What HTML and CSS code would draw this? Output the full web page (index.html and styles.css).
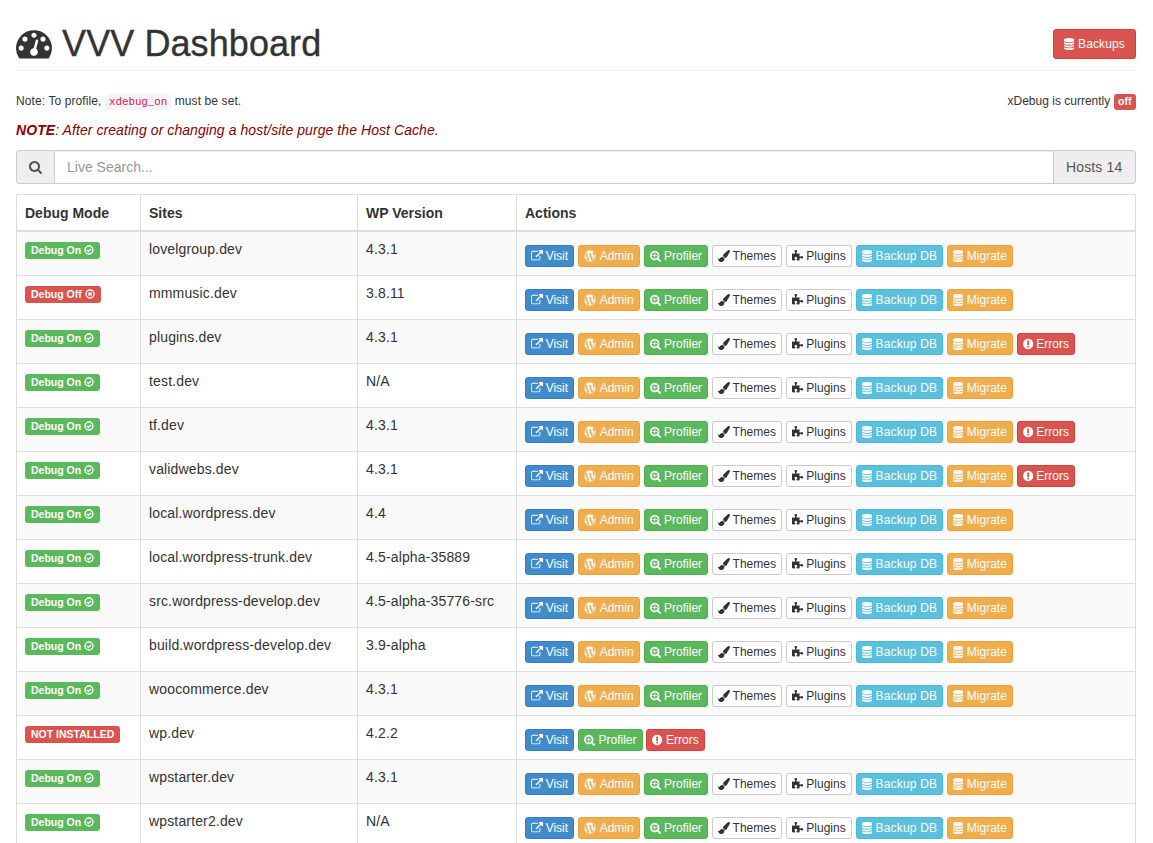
FILE: index.html
```html
<!DOCTYPE html>
<html lang="en">
<head>
  <meta charset="UTF-8">
  <title>VVV Dashboard</title>
  <link rel="stylesheet" href="styles.css">
</head>
<body>

  <svg class="sprite" xmlns="http://www.w3.org/2000/svg">
    <symbol id="i-dash" viewBox="0 0 1792 1792"><path d="M384 1152q0-53-37.5-90.5t-90.5-37.5-90.5 37.5-37.5 90.5 37.5 90.5 90.5 37.5 90.5-37.5 37.5-90.5zm192-448q0-53-37.5-90.5t-90.5-37.5-90.5 37.5-37.5 90.5 37.5 90.5 90.5 37.5 90.5-37.5 37.5-90.5zm428 481l101-382q6-26-7.5-48.5t-38.5-29.5-48 6.5-30 39.5l-101 382q-60 5-107 43.5t-63 98.5q-20 77 20 146t117 89 146-20 89-117q16-60-6-117t-72-91zm660-33q0-53-37.5-90.5t-90.5-37.5-90.5 37.5-37.5 90.5 37.5 90.5 90.5 37.5 90.5-37.5 37.5-90.5zm-640-640q0-53-37.5-90.5t-90.5-37.5-90.5 37.5-37.5 90.5 37.5 90.5 90.5 37.5 90.5-37.5 37.5-90.5zm448 192q0-53-37.5-90.5t-90.5-37.5-90.5 37.5-37.5 90.5 37.5 90.5 90.5 37.5 90.5-37.5 37.5-90.5zm320 448q0 261-141 483-19 29-54 29h-1402q-35 0-54-29-141-221-141-483 0-182 71-348t191-286 286-191 348-71 348 71 286 191 191 286 71 348z"/></symbol>
    <symbol id="i-db" viewBox="0 0 1536 1792"><path d="M768 768q237 0 443-43t325-127v170q0 69-103 128t-280 93.5-385 34.5-385-34.5-280-93.5-103-128v-170q119 84 325 127t443 43zm0 768q237 0 443-43t325-127v170q0 69-103 128t-280 93.5-385 34.5-385-34.5-280-93.5-103-128v-170q119 84 325 127t443 43zm0-384q237 0 443-43t325-127v170q0 69-103 128t-280 93.5-385 34.5-385-34.5-280-93.5-103-128v-170q119 84 325 127t443 43zm0-1152q208 0 385 34.5t280 93.5 103 128v128q0 69-103 128t-280 93.5-385 34.5-385-34.5-280-93.5-103-128v-128q0-69 103-128t280-93.5 385-34.5z"/></symbol>
    <symbol id="i-search" viewBox="0 0 1664 1792"><path d="M1152 832q0-185-131.5-316.5t-316.5-131.5-316.5 131.5-131.5 316.5 131.5 316.5 316.5 131.5 316.5-131.5 131.5-316.5zm512 832q0 52-38 90t-90 38q-54 0-90-38l-343-342q-179 124-399 124-143 0-273.5-55.5t-225-150-150-225-55.5-273.5 55.5-273.5 150-225 225-150 273.5-55.5 273.5 55.5 225 150 150 225 55.5 273.5q0 220-124 399l343 343q37 37 37 90z"/></symbol>
    <symbol id="i-link" viewBox="0 0 1792 1792"><path d="M1408 928v320q0 119-84.5 203.5t-203.5 84.5h-832q-119 0-203.5-84.5t-84.5-203.5v-832q0-119 84.5-203.5t203.5-84.5h704q14 0 23 9t9 23v64q0 14-9 23t-23 9h-704q-66 0-113 47t-47 113v832q0 66 47 113t113 47h832q66 0 113-47t47-113v-320q0-14 9-23t23-9h64q14 0 23 9t9 23zm384-864v512q0 26-19 45t-45 19-45-19l-176-176-652 652q-10 10-23 10t-23-10l-114-114q-10-10-10-23t10-23l652-652-176-176q-19-19-19-45t19-45 45-19h512q26 0 45 19t19 45z"/></symbol>
    <symbol id="i-wp" viewBox="0 0 1792 1792"><path d="M127 896q0-163 67-313l367 1005q-196-95-315-281t-119-411zm1288-39q0 19-2.5 38.5t-10 49.5-11.5 44-17.5 59-17.5 58l-76 256-278-826q46-3 88-8 19-2 26-18.5t-2.5-31-28.5-13.5l-205 10q-75-1-202-10-12-1-20.5 5t-11.5 15-1.5 18.5 9 16.5 19.5 8l80 8 120 328-168 504-280-832q46-3 88-8 19-2 26-18.5t-2.5-31-28.5-13.5l-205 10q-7 0-23-.5t-26-.5q105-160 274.5-253.5t367.5-93.5q147 0 280.5 53t238.5 149h-10q-55 0-92 40.5t-37 95.5q0 12 2 24t4 21.5 8 23 9 21 12 22.5 12.5 21 14.5 24 14 23q63 107 63 212zm-506 106l237 647q1 6 5 11-126 44-255 44-112 0-217-32zm661-436q95 174 95 369 0 209-104 385.5t-279 278.5l235-678q59-169 59-276 0-42-6-79zm-674-527q182 0 348 71t286 191 191 286 71 348-71 348-191 286-286 191-348 71-348-71-286-191-191-286-71-348 71-348 191-286 286-191 348-71zm0 1751q173 0 331.5-68t273-182.5 182.5-273 68-331.5-68-331.5-182.5-273-273-182.5-331.5-68-331.5 68-273 182.5-182.5 273-68 331.5 68 331.5 182.5 273 273 182.5 331.5 68z"/></symbol>
    <symbol id="i-zoom" viewBox="0 0 1664 1792"><path d="M1024 800v64q0 13-9.5 22.5t-22.5 9.5h-224v224q0 13-9.5 22.5t-22.5 9.5h-64q-13 0-22.5-9.5t-9.5-22.5v-224h-224q-13 0-22.5-9.5t-9.5-22.5v-64q0-13 9.5-22.5t22.5-9.5h224v-224q0-13 9.5-22.5t22.5-9.5h64q13 0 22.5 9.5t9.5 22.5v224h224q13 0 22.5 9.5t9.5 22.5zm128 32q0-185-131.5-316.5t-316.5-131.5-316.5 131.5-131.5 316.5 131.5 316.5 316.5 131.5 316.5-131.5 131.5-316.5zm512 832q0 53-37.5 90.5t-90.5 37.5q-54 0-90-38l-343-342q-179 124-399 124-143 0-273.5-55.5t-225-150-150-225-55.5-273.5 55.5-273.5 150-225 225-150 273.5-55.5 273.5 55.5 225 150 150 225 55.5 273.5q0 220-124 399l343 343q37 37 37 90z"/></symbol>
    <symbol id="i-brush" viewBox="0 0 1792 1792"><path d="M1615 0q70 0 122.5 46.5t52.5 116.5q0 63-45 151-332 629-465 752-97 91-218 91-126 0-216.5-92.5t-90.5-219.5q0-128 92-212l638-579q59-54 130-54zm-909 1034q39 76 106.5 130t150.5 76l1 71q4 213-129.5 347t-348.5 134q-123 0-218-46.5t-152.5-127.5-86.5-183-29-220q7 5 41 30t62 44.5 59 36.5 46 17q41 0 55-37 25-66 57.5-112.5t69.5-76 88-47.5 103-25.5 125-10.5z"/></symbol>
    <symbol id="i-puzzle" viewBox="0 0 1664 1792"><path d="M1664 1098q0 81-44.5 135t-123.5 54q-41 0-77.5-17.5t-59-38-56.5-38-71-17.5q-110 0-110 124 0 39 16 115t15 115v5q-22 0-33 1-34 3-97.5 11.5t-115.5 13.5-98 5q-61 0-103-26.5t-42-83.5q0-37 17.5-71t38-56.5 38-59 17.5-77.5q0-79-54-123.5t-135-44.5q-84 0-143 45.5t-59 127.5q0 43 15 83t33.5 64.5 33.5 53 15 50.5q0 45-46 89-37 35-117 35-95 0-245-24-9-2-27.5-4t-27.5-4l-13-2q-3-1-6-1-4 0-4-4v-1024q2 1 17.5 3.5t34 5 21.5 3.5q150 24 245 24 80 0 117-35 46-44 46-89 0-22-15-50.5t-33.5-53-33.5-64.5-15-83q0-82 59-127.5t144-45.5q80 0 134 44.5t54 123.5q0 41-17.5 77.5t-38 59-38 56.5-17.5 71q0 57 42 83.5t103 26.5q64 0 180-15t163-17v2q-1 2-3.5 17.5t-5 34-3.5 21.5q-24 150-24 245 0 80 35 117 44 46 89 46 22 0 50.5-15t53-33.5 64.5-33.5 83-15q82 0 127.5 59t45.5 143z"/></symbol>
    <symbol id="i-err" viewBox="0 0 1536 1792"><path d="M768 128q209 0 385.5 103t279.5 279.5 103 385.5-103 385.5-279.5 279.5-385.5 103-385.5-103-279.5-279.5-103-385.5 103-385.5 279.5-279.5 385.5-103zm128 1247v-190q0-14-9-23.5t-22-9.5h-192q-13 0-23 10t-10 23v190q0 13 10 23t23 10h192q13 0 22-9.5t9-23.5zm-2-344l18-621q0-12-10-18-10-8-24-8h-220q-14 0-24 8-10 6-10 18l17 621q0 10 10 17.5t24 7.5h185q14 0 23.5-7.5t11.5-17.5z"/></symbol>
    <symbol id="i-on" viewBox="0 0 16 16"><circle cx="8" cy="8" r="6.4" fill="none" stroke="currentColor" stroke-width="2.2"/><path d="M4.7 8l2.4 2.4 4.2-4.2" fill="none" stroke="currentColor" stroke-width="2.2"/></symbol>
    <symbol id="i-off" viewBox="0 0 16 16"><circle cx="8" cy="8" r="6.4" fill="none" stroke="currentColor" stroke-width="2.2"/><path d="M5.5 5.5l5 5m0-5l-5 5" fill="none" stroke="currentColor" stroke-width="2.2"/></symbol>
  </svg>

  <div class="container">

    <header class="page-header">
      <h1><svg class="ic ic-dash"><use href="#i-dash"/></svg> VVV Dashboard</h1>
      <a class="btn btn-sm btn-danger" href="#"><svg class="ic ic-db"><use href="#i-db"/></svg> Backups</a>
    </header>

    <div class="note-row">
      <p class="note-profile">Note: To profile, <code>xdebug_on</code> must be set.</p>
      <p>xDebug is currently <span class="label label-danger label-off">off</span></p>
    </div>

    <p class="purge-note"><strong>NOTE</strong>: After creating or changing a host/site purge the Host Cache.</p>

    <div class="input-group">
      <span class="addon addon-left"><svg class="ic ic-search"><use href="#i-search"/></svg></span>
      <input class="search" type="text" placeholder="Live Search...">
      <span class="addon addon-right">Hosts 14</span>
    </div>

    <table class="sites">
      <colgroup>
        <col class="col-debug">
        <col class="col-site">
        <col class="col-wp">
        <col>
      </colgroup>
      <thead>
        <tr><th>Debug Mode</th><th>Sites</th><th>WP Version</th><th>Actions</th></tr>
      </thead>
      <tbody>
        <tr>
          <td><span class="label label-success">Debug On <svg class="ic ic-o"><use href="#i-on"/></svg></span></td>
          <td>lovelgroup.dev</td>
          <td>4.3.1</td>
          <td><div class="actions">
            <a class="btn btn-primary" href="#"><svg class="ic ic-link"><use href="#i-link"/></svg> Visit</a>
            <a class="btn btn-warning" href="#"><svg class="ic ic-wp"><use href="#i-wp"/></svg> Admin</a>
            <a class="btn btn-success" href="#"><svg class="ic ic-mag"><use href="#i-zoom"/></svg> Profiler</a>
            <a class="btn btn-default" href="#"><svg class="ic ic-brush"><use href="#i-brush"/></svg> Themes</a>
            <a class="btn btn-default" href="#"><svg class="ic ic-mag"><use href="#i-puzzle"/></svg> Plugins</a>
            <a class="btn btn-info" href="#"><svg class="ic ic-db"><use href="#i-db"/></svg> Backup DB</a>
            <a class="btn btn-warning" href="#"><svg class="ic ic-db"><use href="#i-db"/></svg> Migrate</a>
          </div></td>
        </tr>
        <tr>
          <td><span class="label label-danger">Debug Off <svg class="ic ic-o"><use href="#i-off"/></svg></span></td>
          <td>mmmusic.dev</td>
          <td>3.8.11</td>
          <td><div class="actions">
            <a class="btn btn-primary" href="#"><svg class="ic ic-link"><use href="#i-link"/></svg> Visit</a>
            <a class="btn btn-warning" href="#"><svg class="ic ic-wp"><use href="#i-wp"/></svg> Admin</a>
            <a class="btn btn-success" href="#"><svg class="ic ic-mag"><use href="#i-zoom"/></svg> Profiler</a>
            <a class="btn btn-default" href="#"><svg class="ic ic-brush"><use href="#i-brush"/></svg> Themes</a>
            <a class="btn btn-default" href="#"><svg class="ic ic-mag"><use href="#i-puzzle"/></svg> Plugins</a>
            <a class="btn btn-info" href="#"><svg class="ic ic-db"><use href="#i-db"/></svg> Backup DB</a>
            <a class="btn btn-warning" href="#"><svg class="ic ic-db"><use href="#i-db"/></svg> Migrate</a>
          </div></td>
        </tr>
        <tr>
          <td><span class="label label-success">Debug On <svg class="ic ic-o"><use href="#i-on"/></svg></span></td>
          <td>plugins.dev</td>
          <td>4.3.1</td>
          <td><div class="actions">
            <a class="btn btn-primary" href="#"><svg class="ic ic-link"><use href="#i-link"/></svg> Visit</a>
            <a class="btn btn-warning" href="#"><svg class="ic ic-wp"><use href="#i-wp"/></svg> Admin</a>
            <a class="btn btn-success" href="#"><svg class="ic ic-mag"><use href="#i-zoom"/></svg> Profiler</a>
            <a class="btn btn-default" href="#"><svg class="ic ic-brush"><use href="#i-brush"/></svg> Themes</a>
            <a class="btn btn-default" href="#"><svg class="ic ic-mag"><use href="#i-puzzle"/></svg> Plugins</a>
            <a class="btn btn-info" href="#"><svg class="ic ic-db"><use href="#i-db"/></svg> Backup DB</a>
            <a class="btn btn-warning" href="#"><svg class="ic ic-db"><use href="#i-db"/></svg> Migrate</a>
            <a class="btn btn-danger" href="#"><svg class="ic ic-db"><use href="#i-err"/></svg> Errors</a>
          </div></td>
        </tr>
        <tr>
          <td><span class="label label-success">Debug On <svg class="ic ic-o"><use href="#i-on"/></svg></span></td>
          <td>test.dev</td>
          <td>N/A</td>
          <td><div class="actions">
            <a class="btn btn-primary" href="#"><svg class="ic ic-link"><use href="#i-link"/></svg> Visit</a>
            <a class="btn btn-warning" href="#"><svg class="ic ic-wp"><use href="#i-wp"/></svg> Admin</a>
            <a class="btn btn-success" href="#"><svg class="ic ic-mag"><use href="#i-zoom"/></svg> Profiler</a>
            <a class="btn btn-default" href="#"><svg class="ic ic-brush"><use href="#i-brush"/></svg> Themes</a>
            <a class="btn btn-default" href="#"><svg class="ic ic-mag"><use href="#i-puzzle"/></svg> Plugins</a>
            <a class="btn btn-info" href="#"><svg class="ic ic-db"><use href="#i-db"/></svg> Backup DB</a>
            <a class="btn btn-warning" href="#"><svg class="ic ic-db"><use href="#i-db"/></svg> Migrate</a>
          </div></td>
        </tr>
        <tr>
          <td><span class="label label-success">Debug On <svg class="ic ic-o"><use href="#i-on"/></svg></span></td>
          <td>tf.dev</td>
          <td>4.3.1</td>
          <td><div class="actions">
            <a class="btn btn-primary" href="#"><svg class="ic ic-link"><use href="#i-link"/></svg> Visit</a>
            <a class="btn btn-warning" href="#"><svg class="ic ic-wp"><use href="#i-wp"/></svg> Admin</a>
            <a class="btn btn-success" href="#"><svg class="ic ic-mag"><use href="#i-zoom"/></svg> Profiler</a>
            <a class="btn btn-default" href="#"><svg class="ic ic-brush"><use href="#i-brush"/></svg> Themes</a>
            <a class="btn btn-default" href="#"><svg class="ic ic-mag"><use href="#i-puzzle"/></svg> Plugins</a>
            <a class="btn btn-info" href="#"><svg class="ic ic-db"><use href="#i-db"/></svg> Backup DB</a>
            <a class="btn btn-warning" href="#"><svg class="ic ic-db"><use href="#i-db"/></svg> Migrate</a>
            <a class="btn btn-danger" href="#"><svg class="ic ic-db"><use href="#i-err"/></svg> Errors</a>
          </div></td>
        </tr>
        <tr>
          <td><span class="label label-success">Debug On <svg class="ic ic-o"><use href="#i-on"/></svg></span></td>
          <td>validwebs.dev</td>
          <td>4.3.1</td>
          <td><div class="actions">
            <a class="btn btn-primary" href="#"><svg class="ic ic-link"><use href="#i-link"/></svg> Visit</a>
            <a class="btn btn-warning" href="#"><svg class="ic ic-wp"><use href="#i-wp"/></svg> Admin</a>
            <a class="btn btn-success" href="#"><svg class="ic ic-mag"><use href="#i-zoom"/></svg> Profiler</a>
            <a class="btn btn-default" href="#"><svg class="ic ic-brush"><use href="#i-brush"/></svg> Themes</a>
            <a class="btn btn-default" href="#"><svg class="ic ic-mag"><use href="#i-puzzle"/></svg> Plugins</a>
            <a class="btn btn-info" href="#"><svg class="ic ic-db"><use href="#i-db"/></svg> Backup DB</a>
            <a class="btn btn-warning" href="#"><svg class="ic ic-db"><use href="#i-db"/></svg> Migrate</a>
            <a class="btn btn-danger" href="#"><svg class="ic ic-db"><use href="#i-err"/></svg> Errors</a>
          </div></td>
        </tr>
        <tr>
          <td><span class="label label-success">Debug On <svg class="ic ic-o"><use href="#i-on"/></svg></span></td>
          <td>local.wordpress.dev</td>
          <td>4.4</td>
          <td><div class="actions">
            <a class="btn btn-primary" href="#"><svg class="ic ic-link"><use href="#i-link"/></svg> Visit</a>
            <a class="btn btn-warning" href="#"><svg class="ic ic-wp"><use href="#i-wp"/></svg> Admin</a>
            <a class="btn btn-success" href="#"><svg class="ic ic-mag"><use href="#i-zoom"/></svg> Profiler</a>
            <a class="btn btn-default" href="#"><svg class="ic ic-brush"><use href="#i-brush"/></svg> Themes</a>
            <a class="btn btn-default" href="#"><svg class="ic ic-mag"><use href="#i-puzzle"/></svg> Plugins</a>
            <a class="btn btn-info" href="#"><svg class="ic ic-db"><use href="#i-db"/></svg> Backup DB</a>
            <a class="btn btn-warning" href="#"><svg class="ic ic-db"><use href="#i-db"/></svg> Migrate</a>
          </div></td>
        </tr>
        <tr>
          <td><span class="label label-success">Debug On <svg class="ic ic-o"><use href="#i-on"/></svg></span></td>
          <td>local.wordpress-trunk.dev</td>
          <td>4.5-alpha-35889</td>
          <td><div class="actions">
            <a class="btn btn-primary" href="#"><svg class="ic ic-link"><use href="#i-link"/></svg> Visit</a>
            <a class="btn btn-warning" href="#"><svg class="ic ic-wp"><use href="#i-wp"/></svg> Admin</a>
            <a class="btn btn-success" href="#"><svg class="ic ic-mag"><use href="#i-zoom"/></svg> Profiler</a>
            <a class="btn btn-default" href="#"><svg class="ic ic-brush"><use href="#i-brush"/></svg> Themes</a>
            <a class="btn btn-default" href="#"><svg class="ic ic-mag"><use href="#i-puzzle"/></svg> Plugins</a>
            <a class="btn btn-info" href="#"><svg class="ic ic-db"><use href="#i-db"/></svg> Backup DB</a>
            <a class="btn btn-warning" href="#"><svg class="ic ic-db"><use href="#i-db"/></svg> Migrate</a>
          </div></td>
        </tr>
        <tr>
          <td><span class="label label-success">Debug On <svg class="ic ic-o"><use href="#i-on"/></svg></span></td>
          <td>src.wordpress-develop.dev</td>
          <td>4.5-alpha-35776-src</td>
          <td><div class="actions">
            <a class="btn btn-primary" href="#"><svg class="ic ic-link"><use href="#i-link"/></svg> Visit</a>
            <a class="btn btn-warning" href="#"><svg class="ic ic-wp"><use href="#i-wp"/></svg> Admin</a>
            <a class="btn btn-success" href="#"><svg class="ic ic-mag"><use href="#i-zoom"/></svg> Profiler</a>
            <a class="btn btn-default" href="#"><svg class="ic ic-brush"><use href="#i-brush"/></svg> Themes</a>
            <a class="btn btn-default" href="#"><svg class="ic ic-mag"><use href="#i-puzzle"/></svg> Plugins</a>
            <a class="btn btn-info" href="#"><svg class="ic ic-db"><use href="#i-db"/></svg> Backup DB</a>
            <a class="btn btn-warning" href="#"><svg class="ic ic-db"><use href="#i-db"/></svg> Migrate</a>
          </div></td>
        </tr>
        <tr>
          <td><span class="label label-success">Debug On <svg class="ic ic-o"><use href="#i-on"/></svg></span></td>
          <td>build.wordpress-develop.dev</td>
          <td>3.9-alpha</td>
          <td><div class="actions">
            <a class="btn btn-primary" href="#"><svg class="ic ic-link"><use href="#i-link"/></svg> Visit</a>
            <a class="btn btn-warning" href="#"><svg class="ic ic-wp"><use href="#i-wp"/></svg> Admin</a>
            <a class="btn btn-success" href="#"><svg class="ic ic-mag"><use href="#i-zoom"/></svg> Profiler</a>
            <a class="btn btn-default" href="#"><svg class="ic ic-brush"><use href="#i-brush"/></svg> Themes</a>
            <a class="btn btn-default" href="#"><svg class="ic ic-mag"><use href="#i-puzzle"/></svg> Plugins</a>
            <a class="btn btn-info" href="#"><svg class="ic ic-db"><use href="#i-db"/></svg> Backup DB</a>
            <a class="btn btn-warning" href="#"><svg class="ic ic-db"><use href="#i-db"/></svg> Migrate</a>
          </div></td>
        </tr>
        <tr>
          <td><span class="label label-success">Debug On <svg class="ic ic-o"><use href="#i-on"/></svg></span></td>
          <td>woocommerce.dev</td>
          <td>4.3.1</td>
          <td><div class="actions">
            <a class="btn btn-primary" href="#"><svg class="ic ic-link"><use href="#i-link"/></svg> Visit</a>
            <a class="btn btn-warning" href="#"><svg class="ic ic-wp"><use href="#i-wp"/></svg> Admin</a>
            <a class="btn btn-success" href="#"><svg class="ic ic-mag"><use href="#i-zoom"/></svg> Profiler</a>
            <a class="btn btn-default" href="#"><svg class="ic ic-brush"><use href="#i-brush"/></svg> Themes</a>
            <a class="btn btn-default" href="#"><svg class="ic ic-mag"><use href="#i-puzzle"/></svg> Plugins</a>
            <a class="btn btn-info" href="#"><svg class="ic ic-db"><use href="#i-db"/></svg> Backup DB</a>
            <a class="btn btn-warning" href="#"><svg class="ic ic-db"><use href="#i-db"/></svg> Migrate</a>
          </div></td>
        </tr>
        <tr>
          <td><span class="label label-danger">NOT INSTALLED</span></td>
          <td>wp.dev</td>
          <td>4.2.2</td>
          <td><div class="actions">
            <a class="btn btn-primary" href="#"><svg class="ic ic-link"><use href="#i-link"/></svg> Visit</a>
            <a class="btn btn-success" href="#"><svg class="ic ic-mag"><use href="#i-zoom"/></svg> Profiler</a>
            <a class="btn btn-danger" href="#"><svg class="ic ic-db"><use href="#i-err"/></svg> Errors</a>
          </div></td>
        </tr>
        <tr>
          <td><span class="label label-success">Debug On <svg class="ic ic-o"><use href="#i-on"/></svg></span></td>
          <td>wpstarter.dev</td>
          <td>4.3.1</td>
          <td><div class="actions">
            <a class="btn btn-primary" href="#"><svg class="ic ic-link"><use href="#i-link"/></svg> Visit</a>
            <a class="btn btn-warning" href="#"><svg class="ic ic-wp"><use href="#i-wp"/></svg> Admin</a>
            <a class="btn btn-success" href="#"><svg class="ic ic-mag"><use href="#i-zoom"/></svg> Profiler</a>
            <a class="btn btn-default" href="#"><svg class="ic ic-brush"><use href="#i-brush"/></svg> Themes</a>
            <a class="btn btn-default" href="#"><svg class="ic ic-mag"><use href="#i-puzzle"/></svg> Plugins</a>
            <a class="btn btn-info" href="#"><svg class="ic ic-db"><use href="#i-db"/></svg> Backup DB</a>
            <a class="btn btn-warning" href="#"><svg class="ic ic-db"><use href="#i-db"/></svg> Migrate</a>
          </div></td>
        </tr>
        <tr>
          <td><span class="label label-success">Debug On <svg class="ic ic-o"><use href="#i-on"/></svg></span></td>
          <td>wpstarter2.dev</td>
          <td>N/A</td>
          <td><div class="actions">
            <a class="btn btn-primary" href="#"><svg class="ic ic-link"><use href="#i-link"/></svg> Visit</a>
            <a class="btn btn-warning" href="#"><svg class="ic ic-wp"><use href="#i-wp"/></svg> Admin</a>
            <a class="btn btn-success" href="#"><svg class="ic ic-mag"><use href="#i-zoom"/></svg> Profiler</a>
            <a class="btn btn-default" href="#"><svg class="ic ic-brush"><use href="#i-brush"/></svg> Themes</a>
            <a class="btn btn-default" href="#"><svg class="ic ic-mag"><use href="#i-puzzle"/></svg> Plugins</a>
            <a class="btn btn-info" href="#"><svg class="ic ic-db"><use href="#i-db"/></svg> Backup DB</a>
            <a class="btn btn-warning" href="#"><svg class="ic ic-db"><use href="#i-db"/></svg> Migrate</a>
          </div></td>
        </tr>
      </tbody>
    </table>

  </div>

</body>
</html>
```

FILE: styles.css
```css
* {
  box-sizing: border-box;
}

body {
  margin: 0;
  background: #fff;
  color: #333;
  font-family: "Liberation Sans", Arial, sans-serif;
  font-size: 14px;
  line-height: 20px;
}

p {
  margin: 0;
}

.sprite {
  display: none;
}

.container {
  padding: 0 17px 0 16px;
}

/* icons */

.ic {
  display: inline-block;
  width: 1em;
  height: 1em;
  fill: currentColor;
  vertical-align: -2px;
}

.ic-db {
  width: .86em;
}

.ic-mag {
  width: .93em;
}

.ic-link {
  margin-right: -.7px;
}

.ic-wp {
  margin-right: 1px;
}

.ic-brush {
  margin-right: -.5px;
}

.ic-search {
  vertical-align: -1px;
}

.ic-o {
  width: 10px;
  height: 10px;
  vertical-align: -1px;
}

/* header */

.page-header {
  display: flex;
  justify-content: space-between;
  height: 71px;
  padding-top: 20px;
  border-bottom: 1px solid #eee;
}

.page-header h1 {
  margin: 1px 0 0;
  font-size: 36px;
  font-weight: 500;
  line-height: 45px;
  letter-spacing: .08px;
  -webkit-text-stroke: .35px #333;
}

.page-header h1 .ic {
  width: 36px;
  height: 36px;
  vertical-align: -5px;
}

.note-row {
  display: flex;
  justify-content: space-between;
  margin-top: 20px;
  font-size: 12px;
}

.note-profile {
  letter-spacing: .1px;
}

.note-row code {
  padding: 2px 4px;
  border-radius: 4px;
  background: #f9f2f4;
  color: #c7254e;
  font-family: "Liberation Mono", monospace;
  font-size: 10.8px;
  letter-spacing: 0;
}

.purge-note {
  margin-top: 8px;
  color: #8b0000;
  font-style: italic;
  letter-spacing: .07px;
}

/* search */

.input-group {
  display: flex;
  height: 34px;
  margin-top: 10px;
}

.addon {
  display: flex;
  align-items: center;
  padding: 0 12px;
  border: 1px solid #ccc;
  background: #eee;
  color: #555;
}

.addon-left {
  width: 38px;
  border-right: 0;
  border-radius: 4px 0 0 4px;
}

.addon-right {
  width: 82px;
  border-left: 0;
  border-radius: 0 4px 4px 0;
  letter-spacing: .14px;
  white-space: nowrap;
}

.search {
  flex: 1;
  min-width: 0;
  padding: 6px 12px;
  border: 1px solid #ccc;
  font: inherit;
  color: #555;
  box-shadow: inset 0 1px 1px rgba(0, 0, 0, .075);
}

.search::placeholder {
  color: #999;
  opacity: 1;
}

/* table */

.sites {
  width: 100%;
  margin-top: 10px;
  border-collapse: collapse;
  table-layout: fixed;
}

.col-debug {
  width: 124px;
}

.col-site {
  width: 217px;
}

.col-wp {
  width: 159px;
}

.sites th,
.sites td {
  padding: 8px;
  border: 1px solid #ddd;
  text-align: left;
  vertical-align: top;
}

.sites th {
  padding-bottom: 7px;
  border-bottom-width: 2px;
  font-weight: bold;
}

.sites td {
  padding-top: 7px;
  letter-spacing: .15px;
}

.sites tbody tr:nth-child(odd) {
  background: #f9f9f9;
}

.actions {
  display: flex;
  gap: 3.9px;
  margin-top: 6px;
  letter-spacing: 0;
}

/* buttons and labels */

.btn {
  display: inline-block;
  padding: 1px 5px;
  border: 1px solid transparent;
  border-radius: 3px;
  font-size: 12px;
  line-height: 18px;
  white-space: nowrap;
  text-decoration: none;
  color: #fff;
}

.btn-sm {
  height: 30px;
  margin-top: 9px;
  padding: 5px 10px;
  letter-spacing: .14px;
}

.btn-primary {
  background: #428bca;
  border-color: #357ebd;
}

.btn-warning {
  background: #f0ad4e;
  border-color: #eea236;
}

.btn-success {
  background: #5cb85c;
  border-color: #4cae4c;
}

.btn-info {
  background: #5bc0de;
  border-color: #46b8da;
  letter-spacing: .2px;
}

.btn-danger {
  background: #d9534f;
  border-color: #d43f3a;
}

.btn-default {
  background: #fff;
  border-color: #ccc;
  color: #333;
}

.label {
  display: inline-block;
  margin-top: 3px;
  padding: 3px 6px;
  border-radius: 3px;
  color: #fff;
  font-size: 10.5px;
  font-weight: bold;
  line-height: 11px;
  letter-spacing: 0;
  white-space: nowrap;
  vertical-align: top;
}

.label-off {
  margin-top: -1px;
  padding: 2.5px 4.5px;
  vertical-align: baseline;
}

.label-success {
  background: #5cb85c;
}

.label-danger {
  background: #d9534f;
}
```
